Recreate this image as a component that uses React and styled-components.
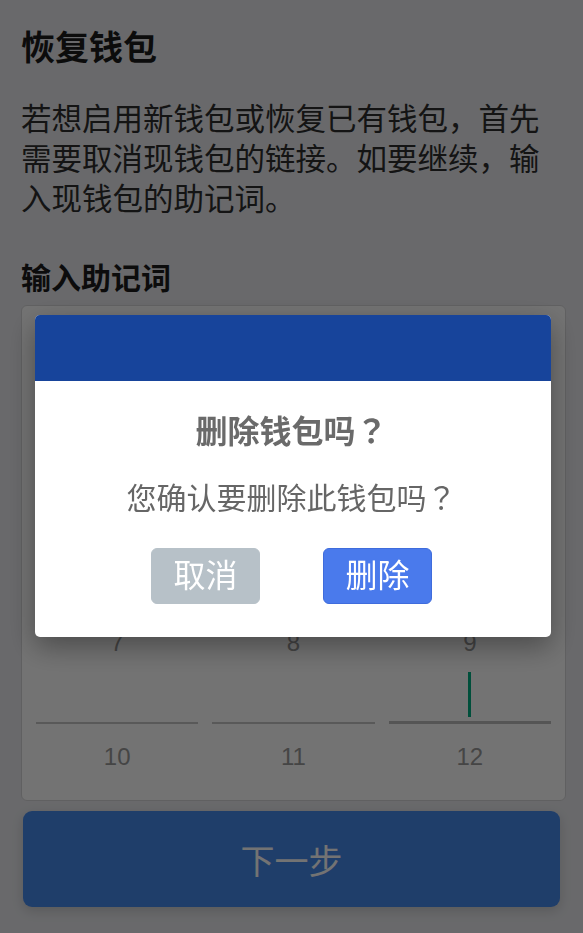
import React, {useState} from "react"
import styled, {createGlobalStyle} from "styled-components"

const GlobalStyle = createGlobalStyle`
  html, body {
    margin: 0;
    padding: 0;
    background: #e8e9ed;
    font-family: "Liberation Sans", "Noto Sans CJK SC", sans-serif;
  }
  * { box-sizing: border-box; }
`

const Page = styled.div`
  padding: 28px 17px 40px 21px;
  min-height: 933px;
`

const Title = styled.h1`
  margin: 0;
  font-size: 34px;
  line-height: 40px;
  font-weight: 700;
  color: #1c1c1c;
`

const Intro = styled.p`
  margin: 31px 8px 0 0;
  font-size: 30.5px;
  line-height: 40px;
  color: #2e2e2e;
`

const SectionTitle = styled.h2`
  margin: 40px 0 0;
  font-size: 30px;
  line-height: 40px;
  font-weight: 700;
  color: #1c1c1c;
`

const WordsCard = styled.div`
  margin-top: 6px;
  border: 1px solid #d6d6d8;
  border-radius: 6px;
  background: #fff;
  padding: 12px 14px 26px;
  display: grid;
  grid-template-columns: repeat(3, 1fr);
  column-gap: 14px;
`

const Cell = styled.div`
  height: 114px;
  display: flex;
  flex-direction: column;
  align-items: center;
`

const WordInput = styled.div`
  position: relative;
  width: 100%;
  height: 64px;
  border-bottom: ${p => (p.$focused ? "3px solid #bcbcbc" : "2px solid #c6c6c6")};
`

const Caret = styled.span`
  position: absolute;
  left: 50%;
  top: 12px;
  width: 3px;
  height: 45px;
  margin-left: -2px;
  background: #00b083;
`

const Index = styled.div`
  margin-top: 16px;
  font-size: 24px;
  line-height: 34px;
  color: #999;
`

const NextButton = styled.button`
  display: block;
  width: 537px;
  height: 96px;
  margin: 10px 0 0 2px;
  border: none;
  border-radius: 9px;
  background: #468aeb;
  color: #fff;
  font-family: inherit;
  font-size: 34px;
  box-shadow: 0 4px 12px rgba(0, 0, 0, 0.15);
`

const Overlay = styled.div`
  position: fixed;
  inset: 0;
  background: rgba(0, 0, 0, 0.55);
  display: flex;
  align-items: flex-start;
  padding: 315px 32px 0 35px;
`

const Modal = styled.div`
  width: 516px;
  background: #fff;
  border-radius: 5px;
  overflow: hidden;
  box-shadow: 0 10px 28px rgba(0, 0, 0, 0.35);
`

const ModalHeader = styled.div`
  height: 66px;
  background: #17449b;
`

const ModalBody = styled.div`
  padding: 31px 23px 33px 20px;
  display: flex;
  flex-direction: column;
  align-items: center;
`

const ModalTitle = styled.div`
  font-size: 32px;
  line-height: 40px;
  font-weight: 700;
  color: #6a6a6a;
`

const ModalText = styled.div`
  margin-top: 27px;
  font-size: 30px;
  line-height: 40px;
  color: #666;
`

// fullwidth question mark, centred in its box; kept out of the line height
const Mark = styled.span`
  font-family: "Noto Sans CJK JP", sans-serif;
  line-height: 0;
`

const Actions = styled.div`
  margin-top: 29px;
  display: flex;
  gap: 63px;
`

const ActionButton = styled.button`
  width: 109px;
  height: 56px;
  border-radius: 6px;
  border: 1px solid ${p => (p.$primary ? "#3f6cdc" : "#b7c1c8")};
  background: ${p => (p.$primary ? "#4a7aec" : "#b7c1c8")};
  color: #fff;
  font-family: inherit;
  font-size: 32px;
  line-height: 1;
  padding: 0;
`

const App = () => {
    const [open, setOpen] = useState(true)
    const words = Array.from({length: 12}, (_, i) => i + 1)

    return (
        <>
        <GlobalStyle />
        <Page>
            <Title>恢复钱包</Title>
            <Intro>若想启用新钱包或恢复已有钱包，首先需要取消现钱包的链接。如要继续，输入现钱包的助记词。</Intro>
            <SectionTitle>输入助记词</SectionTitle>
            <WordsCard>
                {words.map(n => (
                    <Cell key={"W" + n}>
                        <WordInput $focused={n === 12}>
                            {n === 12 && <Caret />}
                        </WordInput>
                        <Index>{n}</Index>
                    </Cell>
                ))}
            </WordsCard>
            <NextButton>下一步</NextButton>
        </Page>
        {open && (
            <Overlay>
                <Modal>
                    <ModalHeader />
                    <ModalBody>
                        <ModalTitle>删除钱包吗<Mark>？</Mark></ModalTitle>
                        <ModalText>您确认要删除此钱包吗<Mark>？</Mark></ModalText>
                        <Actions>
                            <ActionButton onClick={() => setOpen(false)}>取消</ActionButton>
                            <ActionButton $primary onClick={() => setOpen(false)}>删除</ActionButton>
                        </Actions>
                    </ModalBody>
                </Modal>
            </Overlay>
        )}
        </>
    )
}

export default App
